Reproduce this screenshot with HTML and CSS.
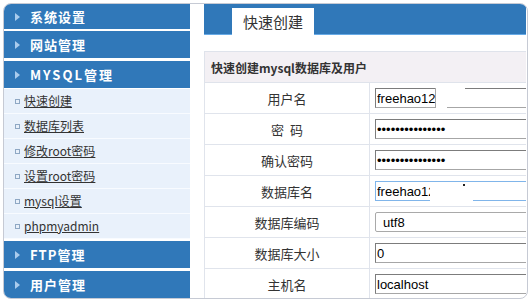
FILE: index.html
```html
<!DOCTYPE html>
<html lang="zh-CN">

<head>
    <meta charset="UTF-8">
    <title>快速创建</title>
    <link rel="stylesheet" href="styles.css">
</head>

<body>

    <div class="frame">
        <div class="side">
            <div class="menu-head first">系统设置</div>
            <div class="menu-head">网站管理</div>
            <div class="menu-head open">MYSQL管理</div>
            <ul class="sub">
                <li><a href="#">快速创建</a></li>
                <li><a href="#">数据库列表</a></li>
                <li><a href="#">修改root密码</a></li>
                <li><a href="#">设置root密码</a></li>
                <li><a href="#">mysql设置</a></li>
                <li><a href="#">phpmyadmin</a></li>
            </ul>
            <div class="menu-head">FTP管理</div>
            <div class="menu-head">用户管理</div>
        </div>

        <div class="main">
            <div class="tabs"><span class="tab">快速创建</span></div>
            <table class="form">
                <colgroup>
                    <col class="col-lbl">
                    <col>
                </colgroup>
                <tr>
                    <th colspan="2">快速创建mysql数据库及用户</th>
                </tr>
                <tr>
                    <td class="lbl">用户名</td>
                    <td class="val">
                        <span class="fld">
                            <input type="text" value="freehao12" />
                            <span class="cut-top"></span><span class="cut-bot"></span><span class="cut-edge"></span>
                        </span>
                    </td>
                </tr>
                <tr>
                    <td class="lbl">密&nbsp;&nbsp;码</td>
                    <td class="val"><span class="fld"><input type="password" value="freehao12345678" /></span></td>
                </tr>
                <tr>
                    <td class="lbl">确认密码</td>
                    <td class="val"><span class="fld"><input type="password" value="freehao12345678" /></span></td>
                </tr>
                <tr>
                    <td class="lbl">数据库名</td>
                    <td class="val">
                        <span class="fld">
                            <input type="text" class="active" value="freehao12" />
                            <span class="cut-in"></span><span class="dot"></span>
                        </span>
                    </td>
                </tr>
                <tr>
                    <td class="lbl">数据库编码</td>
                    <td class="val">
                        <span class="fld">
                            <select>
                                <option>utf8</option>
                                <option>gbk</option>
                                <option>latin1</option>
                            </select>
                        </span>
                    </td>
                </tr>
                <tr>
                    <td class="lbl">数据库大小</td>
                    <td class="val"><span class="fld"><input type="text" value="0" /></span></td>
                </tr>
                <tr>
                    <td class="lbl">主机名</td>
                    <td class="val"><span class="fld"><input type="text" value="localhost" /></span></td>
                </tr>
            </table>
        </div>
    </div>

</body>

</html>
```

FILE: styles.css
```css
body {
    margin: 0;
    background: #fff;
    font: 12px "Noto Sans CJK SC", "Microsoft YaHei", sans-serif;
    color: #333;
}

.frame {
    display: flex;
    margin: 3px;
    width: 525px;
    height: 296px;
    box-sizing: border-box;
    border: 1px solid #c6cad4;
    border-radius: 8px;
    overflow: hidden;
}

/* left menu */
.side {
    width: 186px;
    flex-shrink: 0;
}

.menu-head {
    height: 27px;
    line-height: 27px;
    margin-bottom: 3px;
    background: #3078b9;
    color: #fff;
    font-size: 13px;
    font-weight: bold;
    letter-spacing: 1px;
}

.menu-head::before {
    content: "";
    display: inline-block;
    vertical-align: middle;
    margin: -2px 10px 0 11px;
    border-left: 5px solid #a9cbed;
    border-top: 4px solid transparent;
    border-bottom: 4px solid transparent;
}

.menu-head.first {
    height: 25px;
    line-height: 25px;
    margin-bottom: 2px;
}

.menu-head.open {
    margin-bottom: 1px;
    letter-spacing: 2px;
}

.sub {
    list-style: none;
    margin: 0 0 2px;
    padding: 0;
}

.sub li {
    height: 24px;
    line-height: 24px;
    padding-left: 11px;
    background: #e9f1fb;
    border-bottom: 1px solid #f8fbff;
}

.sub li::before {
    content: "";
    display: inline-block;
    vertical-align: middle;
    width: 3px;
    height: 3px;
    margin: -2px 4px 0 0;
    border: 1px solid #8fa8c4;
}

.sub a {
    color: #333;
    text-decoration: underline;
}

/* right panel */
.main {
    width: 322px;
    margin-left: 14px;
    overflow: hidden;
}

.tabs {
    height: 31px;
    box-sizing: border-box;
    padding: 4px 0 0 28px;
    background: #3078b9;
    border-bottom: 1px solid #67aae6;
}

.tab {
    display: inline-block;
    vertical-align: top;
    height: 27px;
    line-height: 27px;
    padding: 0 11px;
    background: #fff;
    color: #333;
    font-size: 15px;
}

.form {
    margin-top: 16px;
    width: 400px;
    table-layout: fixed;
    border-collapse: collapse;
}

.form .col-lbl {
    width: 165px;
}

.form th {
    height: 30px;
    padding: 0 0 0 6px;
    text-align: left;
    background: #f3f0f4;
    border: 1px solid #dfe3eb;
    font-size: 12px;
}

.form td {
    height: 30px;
    padding: 0;
    border: 1px solid #e0e4ec;
}

.form .lbl {
    text-align: center;
    font-size: 13px;
}

.form .val {
    padding-left: 5px;
}

.fld {
    position: relative;
    display: inline-block;
    vertical-align: middle;
}

.fld input,
.fld select {
    display: block;
    width: 220px;
    height: 20px;
    box-sizing: border-box;
    margin: 0;
    padding: 0 1px;
    border: 1px solid #a6a6a6;
    border-top-color: #7c7c7c;
    border-left-color: #7c7c7c;
    background: #fff;
    color: #000;
    font: 13px "Liberation Sans", Arial, sans-serif;
    outline: none;
}

.fld select {
    padding-left: 3px;
    border-color: #a9a9a9;
    border-radius: 2px;
}

.fld input.active {
    border-color: #80b5ea;
}

/* broken redraw bits seen in the screenshot */
.cut-top,
.cut-bot,
.cut-in,
.cut-edge,
.dot {
    position: absolute;
}

.cut-top {
    left: 61px;
    top: 0;
    width: 29px;
    height: 2px;
    background: #fff;
}

.cut-bot {
    left: 61px;
    bottom: 0;
    width: 11px;
    height: 2px;
    background: #fff;
}

.cut-edge {
    left: 60px;
    top: 0;
    height: 20px;
    border-left: 1px solid #a6a6a6;
}

.cut-in {
    left: 55px;
    top: 2px;
    bottom: 0;
    width: 43px;
    background: #fff;
}

.dot {
    left: 88px;
    top: 3px;
    width: 2px;
    height: 2px;
    background: #222;
}
```
